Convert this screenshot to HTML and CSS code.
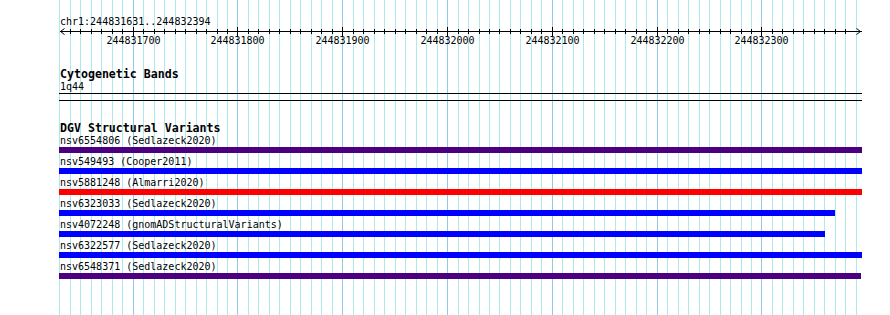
FILE: index.html
```html
<!DOCTYPE html>
<html lang="en">
<head>
    <meta charset="UTF-8">
    <title>Genome Browser</title>
    <link rel="stylesheet" href="styles.css">
</head>
<body>

<div class="view">
    <svg class="grid" id="grid" width="890" height="315"></svg>

    <div class="locus">chr1:244831631..244832394</div>
    <svg class="scale" id="scale" width="890" height="22">
        <rect x="60" y="4" width="802" height="1" class="rule"></rect>
        <polyline points="64.5,1.5 60.5,4.5 64.5,7.5" class="arrow"></polyline>
        <polyline points="856.5,1.5 860.5,4.5 856.5,7.5" class="arrow"></polyline>
    </svg>

    <div class="track cytobands">
        <div class="track-label">Cytogenetic Bands</div>
        <div class="band-name">1q44</div>
        <div class="band-line"></div>
        <div class="band-line"></div>
    </div>

    <div class="track variants" id="variants">
        <div class="track-label">DGV Structural Variants</div>
    </div>
</div>

<script>
    const NS = 'http://www.w3.org/2000/svg';
    const grid = document.getElementById('grid');
    const scale = document.getElementById('scale');
    const variants = document.getElementById('variants');

    const firstLine = 244831630; // bp of the first gridline
    const origin = 59.3;         // x of the first gridline
    const pxPerBp = 1.048;

    function add(svg, tag, attrs, text) {
        const el = document.createElementNS(NS, tag);
        for (const key in attrs) el.setAttribute(key, attrs[key]);
        if (text) el.textContent = text;
        svg.appendChild(el);
        return el;
    }

    // Gridlines, ticks and labels every 10 bp
    for (let i = 0; i <= 76; i++) {
        const bp = firstLine + i * 10;
        const x = Math.round(origin + i * 10 * pxPerBp);
        const major = bp % 100 === 0;
        add(grid, 'rect', { x: x, y: 0, width: 1, height: 315, class: major ? 'major' : 'minor' });
        if (i >= 1 && i <= 75) {
            add(scale, 'rect', major
                ? { x: x, y: 0, width: 1, height: 9, class: 'rule' }
                : { x: x, y: 2, width: 1, height: 5, class: 'rule' });
        }
        if (major) {
            add(scale, 'text', { x: x + 0.5, y: 17, class: 'tick-label' }, String(bp));
        }
    }

    // DGV features
    const features = [
        { name: 'nsv6554806 (Sedlazeck2020)', width: 803, kind: 'indigo' },
        { name: 'nsv549493 (Cooper2011)', width: 803, kind: 'blue' },
        { name: 'nsv5881248 (Almarri2020)', width: 803, kind: 'red' },
        { name: 'nsv6323033 (Sedlazeck2020)', width: 776, kind: 'blue' },
        { name: 'nsv4072248 (gnomADStructuralVariants)', width: 766, kind: 'blue' },
        { name: 'nsv6322577 (Sedlazeck2020)', width: 803, kind: 'blue' },
        { name: 'nsv6548371 (Sedlazeck2020)', width: 802, kind: 'indigo' }
    ];

    features.forEach(f => {
        const row = document.createElement('div');
        row.className = 'feature';
        row.innerHTML = `
            <div class="feature-name">${f.name}</div>
            <div class="bar ${f.kind}" style="width:${f.width}px"></div>
        `;
        variants.appendChild(row);
    });
</script>

</body>
</html>
```

FILE: styles.css
```css
body {
    margin: 0;
    background-color: #fff;
    color: #000;
    font-family: "DejaVu Sans Mono", "Liberation Mono", monospace;
    font-size: 10px;
}
.view {
    position: relative;
    z-index: 0;
    width: 890px;
    height: 315px;
    padding-top: 16px;
    box-sizing: border-box;
    overflow: hidden;
}
.grid {
    position: absolute;
    top: 0;
    left: 0;
    z-index: -1;
}
.minor {
    fill: #aee9ee;
}
.major {
    fill: #8fc9ec;
}
.locus {
    padding-left: 60px;
    line-height: 11px;
}
.scale {
    display: block;
}
.rule {
    fill: #000;
}
.arrow {
    fill: none;
    stroke: #000;
    stroke-width: 1;
}
.tick-label {
    font-family: "DejaVu Sans Mono", "Liberation Mono", monospace;
    font-size: 10px;
    text-anchor: middle;
    fill: #000;
}
.track-label {
    padding-left: 60px;
    font-size: 11.6px;
    font-weight: bold;
    line-height: 12px;
    margin-bottom: 1px;
}
.cytobands {
    margin-top: 19px;
}
.band-name {
    padding-left: 60px;
    line-height: 11px;
}
.band-line {
    margin: 1px 0 0 59px;
    width: 803px;
    height: 1px;
    background-color: #000;
}
.band-line + .band-line {
    margin-top: 6px;
}
.variants {
    margin-top: 21px;
}
.feature-name {
    padding-left: 60px;
    line-height: 11px;
    white-space: nowrap;
}
.bar {
    margin: 1px 0 3px 59px;
    height: 6px;
}
.indigo {
    background-color: #4b0082;
}
.blue {
    background-color: #0000ff;
}
.red {
    background-color: #ff0000;
}
```
